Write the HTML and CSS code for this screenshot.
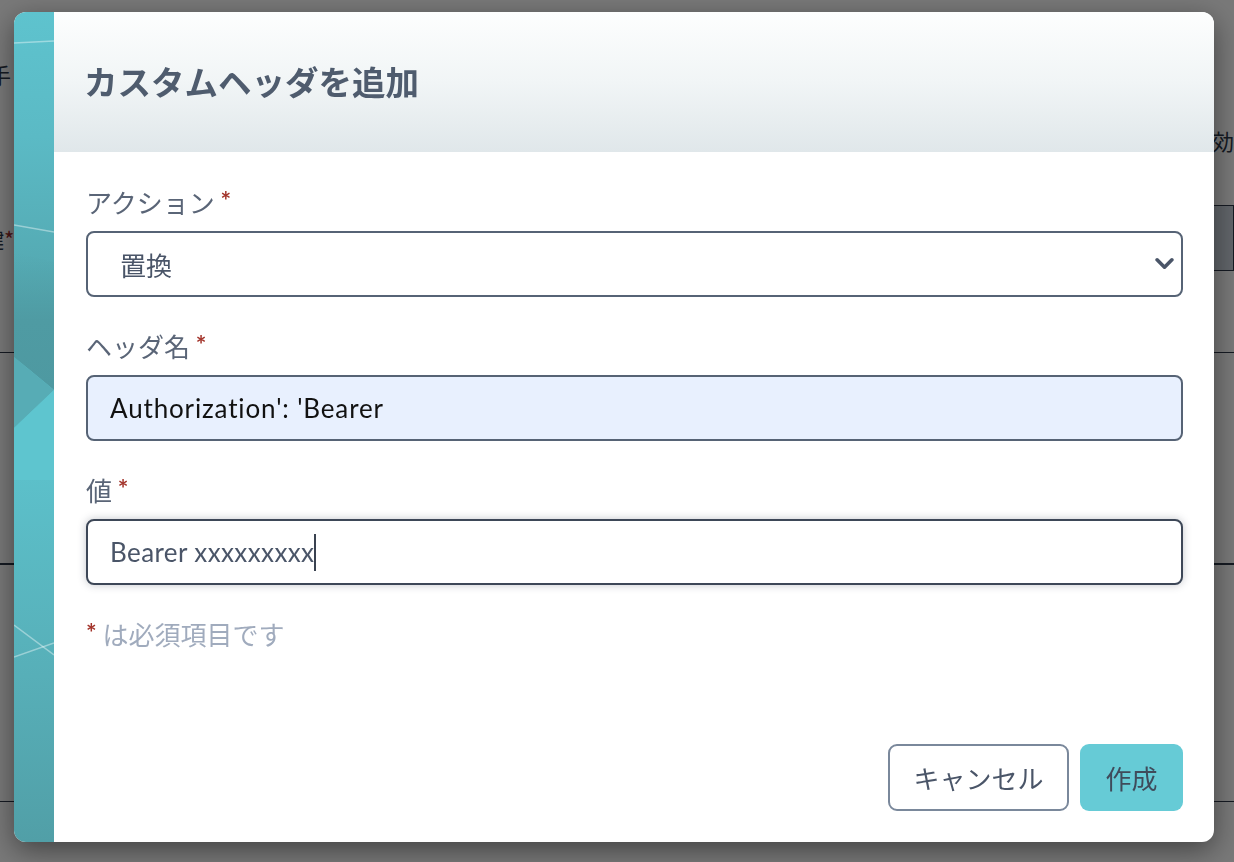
FILE: index.html
```html
<!DOCTYPE html>
<html lang="ja">
<head>
<meta charset="utf-8">
<title>カスタムヘッダを追加</title>
<link rel="stylesheet" href="styles.css">
</head>
<body>
<div class="page">
  <div class="pg-spacer h62"></div>
  <div class="pg-row h24"><span class="pg-text pg-left-text">手</span></div>
  <div class="pg-spacer h41"></div>
  <div class="pg-row h26 end"><span class="pg-text">効</span></div>
  <div class="pg-spacer h52"></div>
  <div class="pg-field">
    <span class="pg-label">鍵<span class="pg-req">*</span></span>
    <div class="pg-box"></div>
  </div>
  <div class="pg-spacer h82 line"></div>
  <div class="pg-spacer h212 line2"></div>
  <div class="pg-spacer h237 line"></div>
</div>

<div class="overlay">
  <div class="modal">
    <div class="strip">
      <svg class="strip-art" viewBox="0 0 40 830" preserveAspectRatio="none" xmlns="http://www.w3.org/2000/svg">
        <defs>
          <linearGradient id="tg" x1="0" y1="0" x2="0" y2="1">
            <stop offset="0" stop-color="#5ec3ce"/>
            <stop offset="0.15" stop-color="#5bbac5"/>
            <stop offset="0.3" stop-color="#55abb4"/>
            <stop offset="0.41" stop-color="#4f9ca4"/>
            <stop offset="0.43" stop-color="#5ec5cf"/>
            <stop offset="0.56" stop-color="#5cc0ca"/>
            <stop offset="0.8" stop-color="#57afb8"/>
            <stop offset="1" stop-color="#519fa7"/>
          </linearGradient>
          <linearGradient id="dk" x1="0" y1="0" x2="0" y2="1">
            <stop offset="0" stop-color="#52a3ab" stop-opacity="0"/>
            <stop offset="0.5" stop-color="#4f9ba3"/>
            <stop offset="1" stop-color="#4e99a1"/>
          </linearGradient>
        </defs>
        <rect x="0" y="0" width="40" height="830" fill="url(#tg)"/>
        <polygon points="0,240 40,250 40,378 0,345" fill="url(#dk)"/>
        <polygon points="0,345 40,378 0,416" fill="#57acb5"/>
        <polygon points="40,378 40,468 0,468 0,416" fill="#5ec5cf"/>
        <line x1="0" y1="31" x2="40" y2="29" stroke="rgba(255,255,255,0.4)" stroke-width="1.5"/>
        <line x1="0" y1="213" x2="40" y2="220" stroke="rgba(255,255,255,0.4)" stroke-width="1.5"/>
        <line x1="0" y1="613" x2="40" y2="643" stroke="rgba(255,255,255,0.4)" stroke-width="1.5"/>
        <line x1="0" y1="645" x2="40" y2="631" stroke="rgba(255,255,255,0.4)" stroke-width="1.5"/>
      </svg>
    </div>
    <div class="main">
      <div class="header">
        <h1 class="title">カスタムヘッダを追加</h1>
      </div>
      <div class="body">
        <div class="field">
          <label class="label">アクション <span class="req">*</span></label>
          <div class="select-wrap">
            <div class="select">置換</div>
            <svg class="chev" viewBox="0 0 18 12" xmlns="http://www.w3.org/2000/svg"><path d="M2 2.5 L9 9.5 L16 2.5" fill="none" stroke="#4a5568" stroke-width="3.4" stroke-linecap="round" stroke-linejoin="round"/></svg>
          </div>
        </div>
        <div class="field">
          <label class="label">ヘッダ名 <span class="req">*</span></label>
          <div class="input autofill">Authorization': 'Bearer</div>
        </div>
        <div class="field">
          <label class="label">値 <span class="req">*</span></label>
          <div class="input focused">Bearer xxxxxxxxx<span class="caret"></span></div>
        </div>
        <p class="note"><span class="req">*</span> は必須項目です</p>
      </div>
      <div class="footer">
        <button class="btn btn-cancel">キャンセル</button>
        <button class="btn btn-primary">作成</button>
      </div>
    </div>
  </div>
</div>
</body>
</html>
```
FILE: styles.css
```css
* { box-sizing: border-box; }
html, body { margin: 0; padding: 0; }
body {
  width: 1234px;
  height: 862px;
  overflow: hidden;
  background: #ffffff;
  font-family: "Lato", "Noto Sans CJK JP", sans-serif;
  color: #4a5568;
}

/* background page (under overlay) */
.page { display: flex; flex-direction: column; width: 1234px; }
.pg-spacer { flex: none; }
.h62 { height: 62px; }
.h41 { height: 41px; }
.h52 { height: 52px; }
.h82 { height: 82px; }
.h212 { height: 212px; }
.h237 { height: 237px; }
.h24 { height: 24px; }
.h26 { height: 26px; }
.line { border-bottom: 1px solid #2d3748; }
.line2 { border-bottom: 2px solid #2d3748; }
.pg-row { display: flex; align-items: center; font-size: 22px; line-height: 24px; color: #2d3748; }
.pg-row.end { justify-content: flex-end; }
.pg-left-text { margin-left: -11px; }
.pg-text { font-family: "Noto Sans CJK JP", sans-serif; }
.pg-field { display: flex; align-items: center; height: 66px; gap: 20px; }
.pg-label { font-family: "Noto Sans CJK JP", sans-serif; font-size: 22px; color: #2d3748; margin-left: -18px; }
.pg-req { color: #9b2c2c; }
.pg-box { flex: 1; height: 66px; border: 1px solid #2d3748; background: #cdd5df; }

/* overlay + modal */
.overlay {
  position: fixed;
  inset: 0;
  background: rgba(0, 0, 0, 0.53);
  display: flex;
  padding: 12px 20px 20px 14px;
}
.modal {
  flex: 1;
  display: flex;
  background: #ffffff;
  border-radius: 12px;
  overflow: hidden;
  box-shadow: 0 8px 28px rgba(0, 0, 0, 0.45);
}
.strip { width: 40px; flex: none; }
.strip-art { display: block; width: 40px; height: 100%; }
.main { flex: 1; display: flex; flex-direction: column; }

.header {
  height: 140px;
  flex: none;
  display: flex;
  align-items: center;
  padding: 0 32px 2px 30px;
  background: linear-gradient(to bottom, #fdfefe 0%, #f1f5f6 50%, #e0e7ea 100%);
}
.title {
  margin: 0;
  font-family: "Noto Sans CJK JP", sans-serif;
  font-weight: 700;
  font-size: 33.5px;
  line-height: 40px;
  color: #4f5c6e;
}

.body {
  flex: 1;
  padding: 32px 31px 0 32px;
  display: flex;
  flex-direction: column;
  gap: 31px;
}
.field { display: flex; flex-direction: column; gap: 11px; }
.label {
  display: block;
  height: 36px;
  font-family: "Noto Sans CJK JP", sans-serif;
  font-size: 26px;
  line-height: 36px;
  color: #5a6577;
}
.req {
  color: #a3342b;
  font-size: 25px;
  line-height: 0;
  vertical-align: 3px;
  font-family: "Lato", sans-serif;
  font-weight: 700;
}

.select-wrap { position: relative; }
.select {
  height: 66px;
  border: 2px solid #566375;
  border-radius: 8px;
  padding-left: 32px;
  display: flex;
  align-items: center;
  font-family: "Noto Sans CJK JP", sans-serif;
  font-size: 26px;
  color: #4a5568;
  background: #ffffff;
}
.chev {
  position: absolute;
  right: 9px;
  top: 26px;
  width: 19px;
  height: 13px;
}

.input {
  height: 66px;
  border: 2px solid #566375;
  border-radius: 8px;
  padding-left: 22px;
  display: flex;
  align-items: center;
  font-size: 26px;
  letter-spacing: 0.65px;
  color: #4a5568;
  background: #ffffff;
}
.input.autofill { background: #e8f0fe; color: #111111; letter-spacing: 0.85px; }
.input.focused {
  border-color: #3d4757;
  box-shadow: 0 0 9px rgba(45, 55, 72, 0.28);
  letter-spacing: 0.4px;
}
.caret {
  display: inline-block;
  width: 2px;
  height: 37px;
  background: #3a4250;
  margin-left: -0.4px;
}

.note {
  margin: 0;
  height: 36px;
  font-family: "Noto Sans CJK JP", sans-serif;
  font-size: 26px;
  line-height: 36px;
  color: #a0abbd;
}

.footer {
  display: flex;
  justify-content: flex-end;
  gap: 11px;
  padding: 0 31px 31px 0;
}
.btn {
  height: 67px;
  border-radius: 9px;
  font-family: "Noto Sans CJK JP", sans-serif;
  font-size: 26px;
  color: #4a5568;
  cursor: pointer;
}
.btn-cancel {
  width: 181px;
  background: #ffffff;
  border: 2px solid #7a889b;
}
.btn-primary {
  width: 103px;
  background: #66cbd6;
  border: none;
  color: #3f4b5b;
}
```
